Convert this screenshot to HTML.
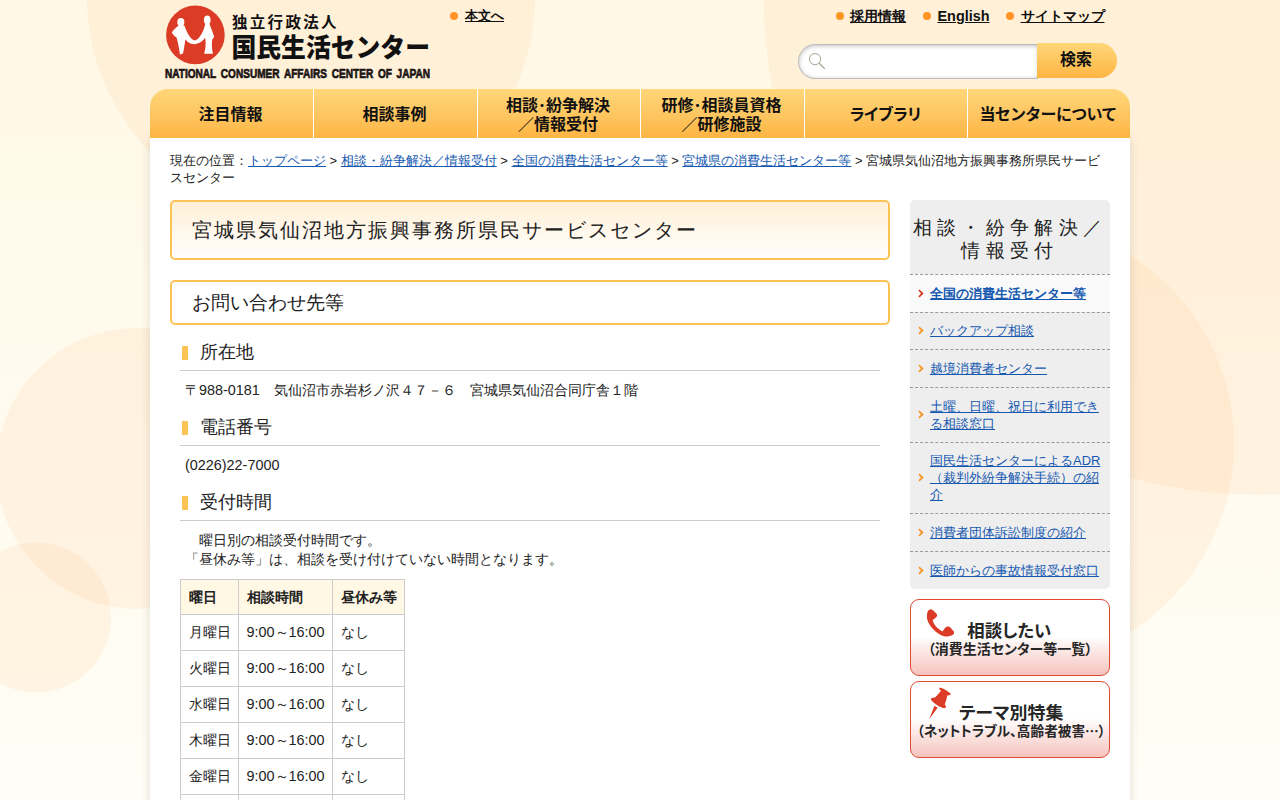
<!DOCTYPE html>
<html lang="ja">
<head>
<meta charset="utf-8">
<title>宮城県気仙沼地方振興事務所県民サービスセンター</title>
<style>
*{box-sizing:border-box;}
html,body{margin:0;padding:0;}
body{width:1280px;height:800px;overflow:hidden;position:relative;background:linear-gradient(#fff8e6,#fffdf6);
  font-family:"Liberation Sans",sans-serif;color:#222;font-size:14.4px;line-height:1.3;}
a{color:#1558b0;text-decoration:underline;}
.bg{position:absolute;left:0;top:0;width:1280px;height:800px;z-index:0;}
#wrap{position:absolute;left:150px;top:0;width:980px;height:800px;z-index:1;}
#shadow{position:absolute;left:0;top:138px;width:980px;height:680px;box-shadow:0 0 9px rgba(80,70,50,.17);}
#white{position:absolute;left:0;top:138px;width:980px;height:662px;background:#fff;}
.b{font-family:"Liberation Sans","Noto Sans CJK JP",sans-serif;font-weight:bold;}

/* header */
#logo{position:absolute;left:10px;top:0;width:280px;height:84px;}
.hl{position:absolute;font-weight:bold;color:#111;font-size:14.4px;line-height:16px;white-space:nowrap;}
.hl a{color:#111;}
.dot{position:absolute;width:8px;height:8px;border-radius:50%;background:#ff9326;}
#sbox{margin:0;padding:0 10px 0 34px;outline:0;font-size:14px;position:absolute;left:648px;top:44px;width:240px;height:35px;border:1px solid #bbb;border-right:0;border-radius:17.5px 0 0 17.5px;background:#fff;box-shadow:inset 0 1px 4px rgba(0,0,0,.25);}
#sbtn{margin:0;border:0;padding:0;cursor:pointer;position:absolute;left:887px;top:43px;width:80px;height:35px;border-radius:0 17.5px 17.5px 0;background:linear-gradient(#ffd679,#feb644);text-align:center;line-height:34px;font-size:16px;color:#111;padding:0 2px 1px 0;}

/* nav */
#nav{position:absolute;left:0;top:89px;width:980px;height:49px;border-radius:18px 18px 0 0;background:linear-gradient(#ffd679 0%,#fec55f 55%,#feb543 100%);overflow:hidden;}
#nav div{position:absolute;top:0;height:49px;border-left:1px solid #fff;display:flex;align-items:center;justify-content:center;text-align:center;font-size:16px;line-height:19px;color:#111;padding-top:2px;padding-right:2px;}
#nav div:first-child{border-left:0;}

/* breadcrumb */
#bc{position:absolute;left:20px;top:153px;width:940px;white-space:nowrap;font-size:12.96px;line-height:16.85px;color:#222;}

/* main */
#h1{position:absolute;left:20px;top:200px;width:720px;height:60px;border:2px solid #fcc456;border-radius:5px;background:linear-gradient(#fff0d8,#fffaf2 70%,#fff);font-size:20.16px;letter-spacing:2.016px;line-height:56px;padding-left:20px;color:#222;}
#h2{position:absolute;left:20px;top:280px;width:720px;height:45px;border:2px solid #fcc456;border-radius:5px;background:#fff;font-size:18.72px;line-height:41px;padding-left:20px;color:#222;}
.h3{position:absolute;left:30px;width:700px;height:37px;border-bottom:1px solid #ccc;font-size:18px;line-height:36px;padding-left:20px;color:#222;}
.h3:before{content:"";position:absolute;left:2px;top:11.5px;width:6px;height:14px;background:#fcc456;}
.p{position:absolute;left:35px;font-size:14.4px;line-height:18.72px;color:#222;white-space:nowrap;}
table{position:absolute;left:30px;top:579px;border-collapse:collapse;font-size:14.4px;}
td,th{border:1px solid #ccc;height:36px;padding:0 7.5px;text-align:left;white-space:nowrap;color:#222;}
th{background:#fff8e5;font-weight:bold;height:35px;}

/* side */
#side{position:absolute;left:760px;top:200px;width:200px;height:388.5px;background:#eee;border-radius:5px;overflow:hidden;}
#side h2{margin:0;font-weight:normal;font-size:18.72px;letter-spacing:5.3px;line-height:23px;text-align:center;padding:16px 0 12px 0;color:#222;}
#side .it{border-top:1px dashed #999;position:relative;white-space:nowrap;padding:9.83px 8px 9.84px 20px;font-size:12.96px;line-height:17px;}
#side .it:before{content:"";position:absolute;left:5.5px;top:50%;margin-top:-3.5px;width:5px;height:5px;border-top:2px solid #f7931e;border-right:2px solid #f7931e;transform:rotate(45deg) scale(.8,.8);}
#side .cur{background:#fafafa;font-weight:bold;}
#side .cur:before{border-color:#d9381e;}
.btn{position:absolute;left:760px;width:200px;height:77px;border:1.5px solid #e04a32;border-radius:9px;background:linear-gradient(#fff 0%,#fff 48%,#f5c3bd 100%);}
.btn svg{position:absolute;left:-1.5px;top:-1.5px;width:200px;height:77px;}
</style>
</head>
<body>
<svg class="bg" viewBox="0 0 1280 800">
  <g fill="rgb(255,190,130)" fill-opacity="0.14">
    <circle cx="311" cy="-3.5" r="224"/>
    <circle cx="1260" cy="-1" r="496"/>
    <circle cx="1011" cy="443.5" r="223"/>
    <circle cx="137" cy="468.5" r="140.5"/>
    <circle cx="36" cy="617.5" r="75"/>
  </g>
</svg>
<div id="wrap">
  <div id="shadow"></div>
  <div id="white"></div>

  <svg id="logo" viewBox="0 0 280 84">
    <circle cx="35.4" cy="34.9" r="29.3" fill="#dc3b26"/>
    <g fill="#fff" transform="scale(0.0875)">
      <ellipse cx="238" cy="255" rx="40" ry="48"/>
      <ellipse cx="540" cy="228" rx="38" ry="52"/>
      <path d="M205,298 C180,320 150,345 135,372 C150,400 175,420 190,432 C200,470 215,530 228,622 L262,612 C275,560 282,500 290,450 C320,490 360,505 400,505 C450,500 490,465 515,435 C528,480 522,560 505,615 L605,615 C592,560 588,500 598,452 L620,420 C605,380 590,330 563,268 L517,268 C505,350 450,450 400,463 C350,455 310,380 278,292 Z"/>
    </g>
    <text x="72" y="27.6" font-family="'Noto Sans CJK JP', sans-serif" font-weight="bold" font-size="15.5" fill="#111" textLength="104.5" lengthAdjust="spacing">独立行政法人</text>
    <text x="71.5" y="57.3" font-family="'Noto Sans CJK JP', sans-serif" font-weight="900" font-size="26" fill="#111" textLength="198.5" lengthAdjust="spacingAndGlyphs">国民生活センター</text>
    <text x="5" y="78" font-family="'Liberation Sans', sans-serif" font-weight="bold" font-size="13.5" fill="#1a1414" textLength="265" lengthAdjust="spacingAndGlyphs" stroke="#1a1414" stroke-width="0.7" word-spacing="2.6">NATIONAL CONSUMER AFFAIRS CENTER OF JAPAN</text>
  </svg>

  <span class="dot" style="left:300px;top:12px"></span>
  <div class="hl" style="left:315px;top:8px;font-size:12.96px"><a href="#">本文へ</a></div>

  <span class="dot" style="left:685.5px;top:12px"></span>
  <div class="hl" style="left:700px;top:8px"><a href="#">採用情報</a></div>
  <span class="dot" style="left:772.5px;top:12px"></span>
  <div class="hl" style="left:787.5px;top:8px"><a href="#">English</a></div>
  <span class="dot" style="left:856px;top:12px"></span>
  <div class="hl" style="left:870.5px;top:8px"><a href="#">サイトマップ</a></div>

  <input id="sbox" type="text" aria-label="サイト内検索"><svg width="20" height="20" viewBox="0 0 20 20" style="position:absolute;left:658px;top:52px"><circle cx="7" cy="7.1" r="5.6" fill="none" stroke="#a8a892" stroke-width="1"/><path d="M11.2 11.3L16.8 16.9" stroke="#a8a892" stroke-width="1.3"/></svg>
  <button id="sbtn" class="b" type="button">検索</button>

  <div id="nav" class="b">
    <div style="left:0;width:163px">注目情報</div>
    <div style="left:163px;width:164px">相談事例</div>
    <div style="left:327px;width:163px">相談･紛争解決<br>／情報受付</div>
    <div style="left:490px;width:164px">研修･相談員資格<br>／研修施設</div>
    <div style="left:654px;width:163px;letter-spacing:-1.6px">ライブラリ</div>
    <div style="left:817px;width:163px;letter-spacing:-0.7px">当センターについて</div>
  </div>

  <div id="bc">現在の位置：<a href="#">トップページ</a> &gt; <a href="#">相談・紛争解決／情報受付</a> &gt; <a href="#">全国の消費生活センター等</a> &gt; <a href="#">宮城県の消費生活センター等</a> &gt; 宮城県気仙沼地方振興事務所県民サービ<br>スセンター</div>

  <div id="h1">宮城県気仙沼地方振興事務所県民サービスセンター</div>
  <div id="h2">お問い合わせ先等</div>

  <div class="h3" style="top:334px">所在地</div>
  <div class="p" style="top:381px">〒988-0181　気仙沼市赤岩杉ノ沢４７－６　宮城県気仙沼合同庁舎１階</div>
  <div class="h3" style="top:409px">電話番号</div>
  <div class="p" style="top:456px">(0226)22-7000</div>
  <div class="h3" style="top:484px">受付時間</div>
  <div class="p" style="top:531px">　曜日別の相談受付時間です。<br>「昼休み等」は、相談を受け付けていない時間となります。</div>

  <table>
    <tr><th>曜日</th><th>相談時間</th><th>昼休み等</th></tr>
    <tr><td>月曜日</td><td>9:00～16:00</td><td>なし</td></tr>
    <tr><td>火曜日</td><td>9:00～16:00</td><td>なし</td></tr>
    <tr><td>水曜日</td><td>9:00～16:00</td><td>なし</td></tr>
    <tr><td>木曜日</td><td>9:00～16:00</td><td>なし</td></tr>
    <tr><td>金曜日</td><td>9:00～16:00</td><td>なし</td></tr>
    <tr><td>土曜日</td><td>休み</td><td>&nbsp;</td></tr>
  </table>

  <div id="side">
    <h2>相談・紛争解決／<br>情報受付</h2>
    <div class="it cur"><a href="#">全国の消費生活センター等</a></div>
    <div class="it"><a href="#">バックアップ相談</a></div>
    <div class="it"><a href="#">越境消費者センター</a></div>
    <div class="it"><a href="#">土曜、日曜、祝日に利用でき<br>る相談窓口</a></div>
    <div class="it"><a href="#">国民生活センターによるADR<br>（裁判外紛争解決手続）の紹<br>介</a></div>
    <div class="it"><a href="#">消費者団体訴訟制度の紹介</a></div>
    <div class="it"><a href="#">医師からの事故情報受付窓口</a></div>
  </div>

  <div class="btn" style="top:598.5px">
    <svg viewBox="0 0 200 77">
      <path fill="#dc3b26" transform="translate(10,3.5) scale(0.0525)" d="M200,150 C225,148 245,165 320,240 C330,260 325,285 310,300 L240,355 C265,450 340,520 430,570 L470,510 C500,480 545,465 575,490 L645,570 C655,600 645,625 620,640 C580,665 520,670 460,660 C340,630 220,520 150,380 C125,320 125,240 150,180 C160,160 180,150 200,150 Z"/>
      <text x="57.3" y="39.2" font-family="'Noto Sans CJK JP', sans-serif" font-weight="bold" font-size="17.5" fill="#262626" textLength="84" lengthAdjust="spacingAndGlyphs" style="font-feature-settings:'palt'">相談したい</text>
      <text x="17.8" y="56" font-family="'Noto Sans CJK JP', sans-serif" font-weight="bold" font-size="14" fill="#262626" textLength="164.5" lengthAdjust="spacingAndGlyphs" style="font-feature-settings:'palt'">（消費生活センター等一覧）</text>
    </svg>
  </div>
  <div class="btn" style="top:680.5px">
    <svg viewBox="0 0 200 77">
      <path fill="#dc3b26" transform="translate(10,1.5) scale(0.0525)" d="M375,120 C420,118 520,170 585,235 C590,250 575,262 555,262 L520,268 C510,320 490,400 470,440 C485,455 498,470 495,485 C490,505 470,508 455,505 C380,490 270,420 215,355 C205,335 212,315 232,310 C250,308 270,305 290,298 C330,265 370,220 400,172 L372,150 C365,140 366,125 375,120 Z M275,460 L335,500 L175,720 Z"/>
      <text x="49" y="39.2" font-family="'Noto Sans CJK JP', sans-serif" font-weight="bold" font-size="17.5" fill="#262626" textLength="104.5" lengthAdjust="spacingAndGlyphs" style="font-feature-settings:'palt'">テーマ別特集</text>
      <text x="7" y="56" font-family="'Noto Sans CJK JP', sans-serif" font-weight="bold" font-size="14" fill="#262626" textLength="188.5" lengthAdjust="spacingAndGlyphs" style="font-feature-settings:'palt'">（ネットトラブル、高齢者被害…）</text>
    </svg>
  </div>
</div>
</body>
</html>
